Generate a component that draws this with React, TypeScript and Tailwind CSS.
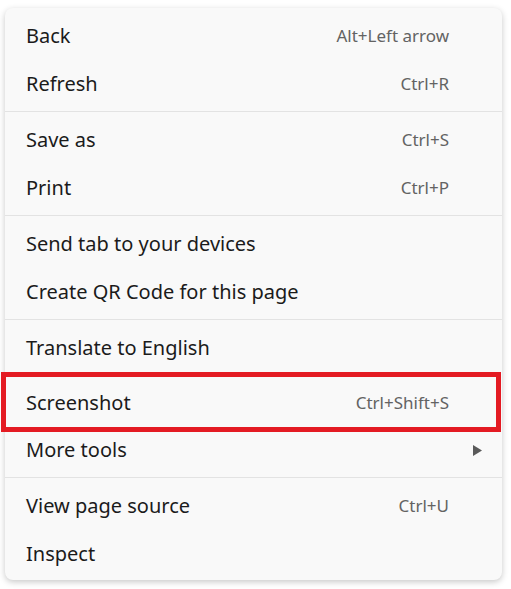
import React from 'react';

type Item = { label: string; shortcut?: string; submenu?: boolean; highlight?: boolean };

const groups: Item[][] = [
  [
    { label: 'Back', shortcut: 'Alt+Left arrow' },
    { label: 'Refresh', shortcut: 'Ctrl+R' },
  ],
  [
    { label: 'Save as', shortcut: 'Ctrl+S' },
    { label: 'Print', shortcut: 'Ctrl+P' },
  ],
  [
    { label: 'Send tab to your devices' },
    { label: 'Create QR Code for this page' },
  ],
  [
    { label: 'Translate to English' },
    { label: 'Screenshot', shortcut: 'Ctrl+Shift+S', highlight: true },
    { label: 'More tools', submenu: true },
  ],
  [
    { label: 'View page source', shortcut: 'Ctrl+U' },
    { label: 'Inspect' },
  ],
];

function Row({ item }: { item: Item }) {
  if (item.highlight) {
    // red annotation box around the row
    return (
      <div className="-ml-[4px] mr-[1px] h-[60px] border-[5px] border-[#e41b23] flex items-center pl-[20px] pr-[47px] pt-[1px]">
        <span className="flex-1 text-[20px] text-[#1b1b1b]">{item.label}</span>
        <span className="text-[17px] text-[#636363]">{item.shortcut}</span>
      </div>
    );
  }
  return (
    <div className={`flex items-center pl-[21px] ${item.submenu ? 'h-[42px] pr-[20px] pb-[6px]' : 'h-[48px] pr-[53px]'}`}>
      <span className="flex-1 text-[20px] text-[#1b1b1b]">{item.label}</span>
      {item.shortcut && <span className="text-[17px] text-[#636363]">{item.shortcut}</span>}
      {item.submenu && (
        <svg width="9" height="11" viewBox="0 0 9 11">
          <polygon points="0,0 9,5.5 0,11" fill="#5a5a5a" />
        </svg>
      )}
    </div>
  );
}

export default function App() {
  return (
    <div className="w-[511px] h-[589px] bg-white pt-[8px] pl-[5px] font-['Noto_Sans',sans-serif]">
      <div className="w-[497px] h-[572px] bg-[#f9f9f9] rounded-[8px] shadow-[0_2px_6px_rgba(0,0,0,0.22)] pt-[4px]">
        {groups.map((g, i) => (
          <div key={i}>
            {i > 0 && <div className="mt-[3px] mb-[4px] h-px bg-[#e3e3e3]" />}
            {g.map((item) => (
              <Row key={item.label} item={item} />
            ))}
          </div>
        ))}
      </div>
    </div>
  );
}
